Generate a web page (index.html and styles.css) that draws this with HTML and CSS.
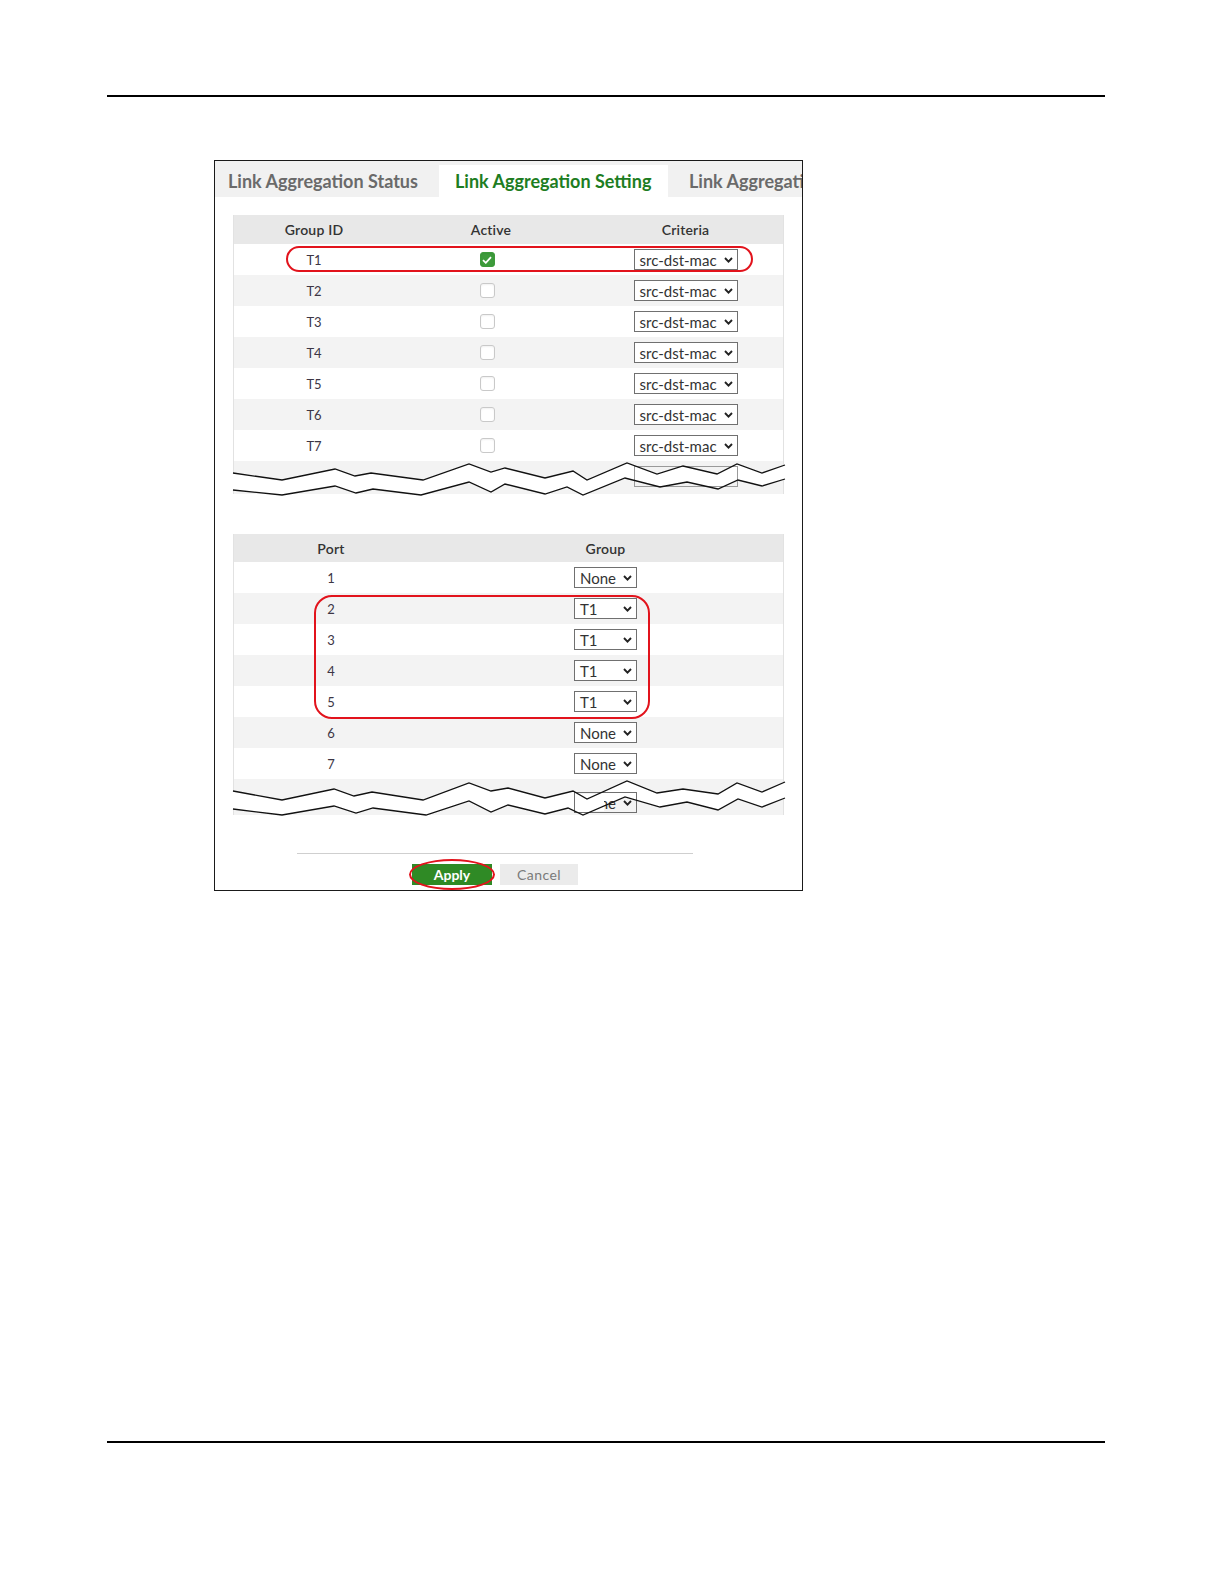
FILE: index.html
```html
<!DOCTYPE html>
<html lang="en">
<head>
<meta charset="utf-8">
<title>Link Aggregation Setting</title>
<link rel="stylesheet" href="styles.css">
</head>
<body>
<div class="page">
  <div class="rule"></div>
  <div class="shot">
    <div class="tabs">
      <div class="tab tab-status">Link Aggregation Status</div>
      <div class="tab tab-active">Link Aggregation Setting</div>
      <div class="tab tab-more">Link Aggregation Protocol</div>
    </div>
    <div class="content">
      <div class="tbl tbl-groups">
        <div class="row head"><div>Group ID</div><div>Active</div><div>Criteria</div></div>
        <div class="row"><div class="txt">T1</div><div><span class="cb on"><svg width="10" height="8" viewBox="0 0 10 8"><path d="M1 4.2 L3.8 6.8 L9 1.2" fill="none" stroke="#fff" stroke-width="1.8"/></svg></span></div><div><div class="sel sel-crit"><span>src-dst-mac</span><svg width="9" height="6" viewBox="0 0 9 6"><path d="M1 1 L4.5 4.6 L8 1" fill="none" stroke="#222" stroke-width="1.9"/></svg></div></div></div>
        <div class="row alt"><div class="txt">T2</div><div><span class="cb"></span></div><div><div class="sel sel-crit"><span>src-dst-mac</span><svg width="9" height="6" viewBox="0 0 9 6"><path d="M1 1 L4.5 4.6 L8 1" fill="none" stroke="#222" stroke-width="1.9"/></svg></div></div></div>
        <div class="row"><div class="txt">T3</div><div><span class="cb"></span></div><div><div class="sel sel-crit"><span>src-dst-mac</span><svg width="9" height="6" viewBox="0 0 9 6"><path d="M1 1 L4.5 4.6 L8 1" fill="none" stroke="#222" stroke-width="1.9"/></svg></div></div></div>
        <div class="row alt"><div class="txt">T4</div><div><span class="cb"></span></div><div><div class="sel sel-crit"><span>src-dst-mac</span><svg width="9" height="6" viewBox="0 0 9 6"><path d="M1 1 L4.5 4.6 L8 1" fill="none" stroke="#222" stroke-width="1.9"/></svg></div></div></div>
        <div class="row"><div class="txt">T5</div><div><span class="cb"></span></div><div><div class="sel sel-crit"><span>src-dst-mac</span><svg width="9" height="6" viewBox="0 0 9 6"><path d="M1 1 L4.5 4.6 L8 1" fill="none" stroke="#222" stroke-width="1.9"/></svg></div></div></div>
        <div class="row alt"><div class="txt">T6</div><div><span class="cb"></span></div><div><div class="sel sel-crit"><span>src-dst-mac</span><svg width="9" height="6" viewBox="0 0 9 6"><path d="M1 1 L4.5 4.6 L8 1" fill="none" stroke="#222" stroke-width="1.9"/></svg></div></div></div>
        <div class="row"><div class="txt">T7</div><div><span class="cb"></span></div><div><div class="sel sel-crit"><span>src-dst-mac</span><svg width="9" height="6" viewBox="0 0 9 6"><path d="M1 1 L4.5 4.6 L8 1" fill="none" stroke="#222" stroke-width="1.9"/></svg></div></div></div>
        <div class="row alt brk brk-groups">
          <svg class="band" width="552" height="40" viewBox="0 0 552 40"><polygon fill="#fff" points="0,12 49,19 102,8 122,15 138,12 190,19 236,3 258,11 272,7 312,17 340,10 354,19 394,2 424,13 450,5 484,13 504,3 529,12 552,4 552,18 529,25 505,19 485,28 454,21 427,26 392,17 350,34 334,26 312,33 272,23 258,31 236,21 188,34 140,28 123,32 102,25 49,34 0,29"/></svg>
          <div></div><div></div><div class="cell-top"><div class="sel sel-crit sel-empty"></div></div>
          <svg class="lines" width="552" height="40" viewBox="0 0 552 40"><polyline fill="none" stroke="#111" stroke-width="1.3" points="0,12 49,19 102,8 122,15 138,12 190,19 236,3 258,11 272,7 312,17 340,10 354,19 394,2 424,13 450,5 484,13 504,3 529,12 552,4"/><polyline fill="none" stroke="#111" stroke-width="1.3" points="0,29 49,34 102,25 123,32 140,28 188,34 236,21 258,31 272,23 312,33 334,26 350,34 392,17 427,26 454,21 485,28 505,19 529,25 552,18"/></svg>
        </div>
        <div class="mark mark-t1"></div>
      </div>

      <div class="tbl tbl-ports">
        <div class="row head head-ports"><div>Port</div><div>Group</div></div>
        <div class="row"><div class="txt">1</div><div><div class="sel sel-grp"><span>None</span><svg width="9" height="6" viewBox="0 0 9 6"><path d="M1 1 L4.5 4.6 L8 1" fill="none" stroke="#222" stroke-width="1.9"/></svg></div></div></div>
        <div class="row alt"><div class="txt">2</div><div><div class="sel sel-grp"><span>T1</span><svg width="9" height="6" viewBox="0 0 9 6"><path d="M1 1 L4.5 4.6 L8 1" fill="none" stroke="#222" stroke-width="1.9"/></svg></div></div></div>
        <div class="row"><div class="txt">3</div><div><div class="sel sel-grp"><span>T1</span><svg width="9" height="6" viewBox="0 0 9 6"><path d="M1 1 L4.5 4.6 L8 1" fill="none" stroke="#222" stroke-width="1.9"/></svg></div></div></div>
        <div class="row alt"><div class="txt">4</div><div><div class="sel sel-grp"><span>T1</span><svg width="9" height="6" viewBox="0 0 9 6"><path d="M1 1 L4.5 4.6 L8 1" fill="none" stroke="#222" stroke-width="1.9"/></svg></div></div></div>
        <div class="row"><div class="txt">5</div><div><div class="sel sel-grp"><span>T1</span><svg width="9" height="6" viewBox="0 0 9 6"><path d="M1 1 L4.5 4.6 L8 1" fill="none" stroke="#222" stroke-width="1.9"/></svg></div></div></div>
        <div class="row alt"><div class="txt">6</div><div><div class="sel sel-grp"><span>None</span><svg width="9" height="6" viewBox="0 0 9 6"><path d="M1 1 L4.5 4.6 L8 1" fill="none" stroke="#222" stroke-width="1.9"/></svg></div></div></div>
        <div class="row"><div class="txt">7</div><div><div class="sel sel-grp"><span>None</span><svg width="9" height="6" viewBox="0 0 9 6"><path d="M1 1 L4.5 4.6 L8 1" fill="none" stroke="#222" stroke-width="1.9"/></svg></div></div></div>
        <div class="row alt brk brk-ports">
          <svg class="band" width="552" height="40" viewBox="0 0 552 40"><polygon fill="#fff" points="0,12 49,21 101,10 121,17 139,13 190,21 236,4 258,12 275,9 312,19 340,12 354,20 394,2 424,14 450,10 485,15 504,4 529,13 552,3 552,19 529,28 505,20 485,31 454,23 427,28 392,18 350,36 335,29 312,35 275,26 258,33 236,22 193,36 140,29 123,34 101,27 49,36 0,30"/></svg>
          <div></div><div class="cell-top"><div class="sel sel-grp sel-hidden"><span>None</span><svg width="9" height="6" viewBox="0 0 9 6"><path d="M1 1 L4.5 4.6 L8 1" fill="none" stroke="#222" stroke-width="1.9"/></svg><span class="cover"></span></div></div>
          <svg class="lines" width="552" height="40" viewBox="0 0 552 40"><polyline fill="none" stroke="#111" stroke-width="1.3" points="0,12 49,21 101,10 121,17 139,13 190,21 236,4 258,12 275,9 312,19 340,12 354,20 394,2 424,14 450,10 485,15 504,4 529,13 552,3"/><polyline fill="none" stroke="#111" stroke-width="1.3" points="0,30 49,36 101,27 123,34 140,29 193,36 236,22 258,33 275,26 312,35 335,29 350,36 392,18 427,28 454,23 485,31 505,20 529,28 552,19"/></svg>
        </div>
        <div class="mark mark-ports"></div>
      </div>

      <div class="footer">
        <div class="btn btn-apply">Apply<span class="mark mark-apply"></span></div>
        <div class="btn btn-cancel">Cancel</div>
      </div>
    </div>
  </div>
  <div class="rule rule-bottom"></div>
</div>
</body>
</html>
```

FILE: styles.css
```css
* { box-sizing: border-box; }

body {
  margin: 0;
  background: #fff;
  font-family: Lato, "Liberation Sans", sans-serif;
}

.page {
  width: 1224px;
  height: 1584px;
  padding-top: 95px;
}

.rule {
  margin-left: 107px;
  width: 998px;
  height: 2px;
  background: #000;
}

.rule-bottom {
  margin-top: 550px;
}

.shot {
  margin: 63px 0 0 214px;
  width: 589px;
  height: 731px;
  border: 1px solid #1a1a1a;
  overflow: hidden;
}

/* tabs */
.tabs {
  display: flex;
  gap: 4px;
  height: 36px;
  background: #f1f1f1;
  white-space: nowrap;
  overflow: hidden;
}

.tab {
  flex: none;
  font-size: 18px;
  font-weight: 700;
  color: #6a6a6a;
  line-height: 36px;
  padding-top: 2px;
}

.tab-status {
  width: 220px;
  padding-left: 13px;
}

.tab-active {
  width: 229px;
  margin-top: 4px;
  padding-top: 0;
  padding-left: 16px;
  line-height: 32px;
  background: #fff;
  color: #1d7d22;
}

.tab-more {
  padding-left: 17px;
}

/* content */
.content {
  padding: 18px 18px 0;
}

.tbl {
  position: relative;
  border-left: 1px solid #e2e2e2;
  border-right: 1px solid #e2e2e2;
  font-size: 13px;
  color: #3d3645;
}

.tbl-ports {
  margin-top: 40px;
}

.row {
  display: grid;
  height: 31px;
  align-items: center;
  justify-items: center;
}

.tbl-groups .row { grid-template-columns: 160px 194px 1fr; }
.tbl-ports .row { grid-template-columns: 194px 1fr; }

.row.alt { background: #f3f3f3; }

.head {
  height: 29px;
  background: #e8e8e8;
  font-size: 14px;
  font-weight: 600;
  color: #333;
  letter-spacing: 0.2px;
}

.head-ports { height: 28px; }

.txt { font-size: 13px; }

/* checkbox */
.cb {
  display: flex;
  align-items: center;
  justify-content: center;
  width: 15px;
  height: 15px;
  margin-right: 8px;
  border: 1.5px solid #c9c9c9;
  border-radius: 3px;
  background: #fff;
  box-shadow: inset 0 1px 2px rgba(0, 0, 0, 0.06);
}

.cb.on {
  background: #3d9b3b;
  border-color: #3d9b3b;
}

/* select */
.sel {
  position: relative;
  display: flex;
  align-items: center;
  justify-content: space-between;
  height: 21px;
  padding: 0 4px 0 5px;
  border: 1px solid #707070;
  background: #fff;
  font-size: 15px;
  color: #333;
}

.sel svg { flex: none; }

.sel-crit { width: 104px; }
.sel-grp { width: 63px; }

/* break rows */
.brk {
  position: relative;
  align-items: start;
}

.brk-groups { height: 33px; }
.brk-ports { height: 36px; }

.band, .lines {
  position: absolute;
  left: -1px;
  top: 0;
  overflow: visible;
}

.band { z-index: 0; }
.lines { z-index: 2; }

.cell-top {
  position: relative;
  z-index: 1;
}

.brk-groups .cell-top { padding-top: 5px; }
.brk-ports .cell-top { padding-top: 13px; }

.sel-empty { background: transparent; border-color: #9a9a9a; }
.sel-hidden { background: transparent; }

.cover {
  position: absolute;
  left: 1px;
  top: 1px;
  width: 28px;
  height: 17px;
  background: #fff;
}

/* red annotation marks */
.mark {
  position: absolute;
  border: 2px solid #e2131c;
  pointer-events: none;
  z-index: 3;
}

.mark-t1 {
  left: 52px;
  top: 31px;
  width: 467px;
  height: 26px;
  border-radius: 13px;
}

.mark-ports {
  left: 80px;
  top: 61px;
  width: 336px;
  height: 124px;
  border-radius: 18px;
}

/* footer */
.footer {
  display: flex;
  justify-content: center;
  gap: 8px;
  width: 396px;
  margin: 38px 0 0 64px;
  padding-top: 10px;
  border-top: 1px solid #cfcfcf;
}

.btn {
  position: relative;
  height: 21px;
  line-height: 21px;
  text-align: center;
  font-size: 14px;
}

.btn-apply {
  width: 80px;
  background: #2f8a25;
  color: #fff;
  font-weight: 700;
}

.btn-cancel {
  width: 78px;
  background: #ebebeb;
  color: #7a7a7a;
  letter-spacing: 0.4px;
}

.mark-apply {
  left: -3px;
  top: -5px;
  width: 86px;
  height: 31px;
  border-radius: 50%;
}
```
